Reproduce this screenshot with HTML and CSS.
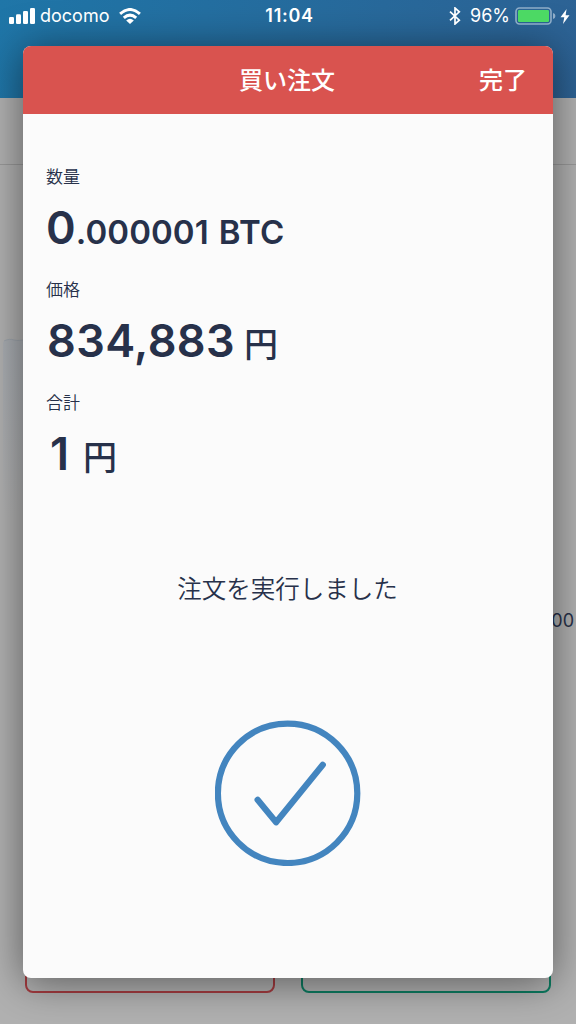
FILE: index.html
```html
<!DOCTYPE html>
<html lang="ja">
<head>
  <meta charset="UTF-8" />
  <title>買い注文</title>
  <meta name="viewport" content="width=device-width, initial-scale=1.0" />
  <link rel="stylesheet" href="styles.css">
</head>
<body>
  <div class="page">
    <div class="topbar"></div>
    <div class="tabs"></div>
    <div class="chart">
      <svg class="chart-line" width="24" height="180" viewBox="0 0 24 180">
        <defs>
          <linearGradient id="fade" x1="0" y1="0" x2="0" y2="1">
            <stop offset="0" stop-color="#a9adb2" />
            <stop offset="1" stop-color="#b1b1b1" />
          </linearGradient>
        </defs>
        <path class="area" d="M3 4 C7 1 11 1 14 2 C18 3 21 2 24 2 V180 H3 Z" />
        <path class="line" d="M4 3 C8 1 11 1 14 2 C18 3 21 2 24 2" />
      </svg>
      <div class="axis">00</div>
    </div>
    <div class="actions">
      <div class="btn sell"></div>
      <div class="btn buy"></div>
    </div>
  </div>

  <div class="modal">
    <div class="modal-header">
      <span></span>
      <h1>買い注文</h1>
      <a class="done">完了</a>
    </div>
    <div class="modal-body">
      <div class="field">
        <div class="label">数量</div>
        <div class="value amount"><b>0</b><span class="decimals">.000001</span><span class="unit">BTC</span></div>
      </div>
      <div class="field">
        <div class="label">価格</div>
        <div class="value price"><b>834,883</b><span class="yen">円</span></div>
      </div>
      <div class="field">
        <div class="label">合計</div>
        <div class="value total"><b>1</b><span class="yen">円</span></div>
      </div>
      <p class="message">注文を実行しました</p>
      <svg class="check" width="146" height="146" viewBox="0 0 146 146">
        <circle cx="72.6" cy="73.3" r="69.7" />
        <path d="M42.6 79.8 L61.1 102.3 L107.8 44.8" />
      </svg>
    </div>
  </div>

  <div class="statusbar">
    <div class="status-left">
      <svg width="26" height="16" viewBox="0 0 26 16">
        <rect x="0" y="9" width="5" height="7" rx="1.3" />
        <rect x="7" y="6.3" width="5" height="9.7" rx="1.3" />
        <rect x="14" y="3" width="5" height="13" rx="1.3" />
        <rect x="21" y="0" width="5" height="16" rx="1.3" />
      </svg>
      <span class="carrier">docomo</span>
      <svg width="22" height="16" viewBox="0 0 22 16">
        <path class="wave" d="M1.1 5.8 Q11 -2.8 20.9 5.8" />
        <path class="wave" d="M4.8 9.9 Q11 4.4 17.2 9.9" />
        <path d="M7.2 12.4 Q11 9 14.8 12.4 L11 16 Z" />
      </svg>
    </div>
    <div class="clock">11:04</div>
    <div class="status-right">
      <svg width="12" height="18" viewBox="0 0 12 18">
        <path class="bluetooth" d="M1 4.6 L10.3 13.2 L6 17 V1 L10.3 4.8 L1 13.4" />
      </svg>
      <span class="percent">96%</span>
      <svg width="41" height="18" viewBox="0 0 41 18">
        <rect class="battery" x="1" y="1" width="35" height="16" rx="3.5" />
        <rect class="charge" x="3" y="3" width="31" height="12" rx="1.2" />
        <path class="cap" d="M38 6 Q40.4 6.7 40.4 9 Q40.4 11.3 38 12 Z" />
      </svg>
      <svg width="10" height="15" viewBox="0 0 10 15">
        <path d="M6.6 0 L0.5 8.2 H4.3 L3 15 L9.5 6.3 H5.6 Z" />
      </svg>
    </div>
  </div>
</body>
</html>
```
FILE: styles.css
```css
:root {
  --red: #d9534f;
  --navy: #27314a;
  --blue: #4385bf;
  --paper: #fbfbfb;
}

* {
  box-sizing: border-box;
}

body {
  margin: 0;
  position: relative;
  width: 576px;
  height: 1024px;
  overflow: hidden;
  font-family: Inter, "Noto Sans CJK JP", sans-serif;
  color: var(--navy);
}

/* dimmed page behind the dialog */
.page {
  display: flex;
  flex-direction: column;
  height: 100%;
  background: #b1b1b1;
}

.topbar {
  height: 98px;
  background: linear-gradient(100deg, #1f76a8, #2d6294);
}

.tabs {
  height: 67px;
  border-bottom: 1px solid #999;
}

.chart {
  flex: 1;
  display: flex;
  flex-direction: column;
  justify-content: space-between;
  padding-top: 173px;
  padding-bottom: 302px;
}

.chart-line .area {
  fill: url(#fade);
}

.chart-line .line {
  fill: none;
  stroke: #9da4ac;
  stroke-width: 1;
}

.axis {
  align-self: flex-end;
  padding-right: 2px;
  font-size: 18px;
  line-height: 20px;
}

.actions {
  display: flex;
  justify-content: space-between;
  padding: 0 25px 31px;
}

.btn {
  width: 250px;
  height: 60px;
  border: 2px solid;
  border-radius: 8px;
}

.sell {
  border-color: #a53c40;
}

.buy {
  border-color: #0c7c61;
}

/* dialog */
.modal {
  position: absolute;
  top: 46px;
  left: 23px;
  width: 530px;
  height: 932px;
  display: flex;
  flex-direction: column;
  background: var(--paper);
  border-radius: 8px;
  box-shadow: 0 4px 42px rgba(0, 0, 0, 0.5);
  overflow: hidden;
}

.modal-header {
  display: grid;
  grid-template-columns: 1fr auto 1fr;
  align-items: center;
  height: 68px;
  padding: 2px 26px 0 24px;
  background: var(--red);
  color: #fff;
}

.modal-header h1,
.done {
  margin: 0;
  font-size: 24px;
  font-weight: 500;
  line-height: 36px;
}

.done {
  text-align: right;
}

.modal-body {
  display: flex;
  flex-direction: column;
  padding: 50px 24px 0 23px;
}

.field {
  height: 113px;
}

.label {
  height: 26px;
  font-size: 17px;
  font-weight: 350;
  line-height: 26px;
}

.value {
  display: flex;
  align-items: baseline;
  height: 66px;
  font-size: 33px;
  font-weight: 600;
  line-height: 76px;
}

.value b {
  font-size: 45px;
  font-weight: 600;
}

.decimals {
  letter-spacing: 0.1px;
}

.unit {
  margin-left: 10px;
  letter-spacing: 0.3px;
}

.price b {
  padding-left: 1px;
  letter-spacing: 0.4px;
}

.total b {
  padding: 0 5px 0 4px;
}

.yen {
  margin-left: 9px;
  font-size: 34px;
  font-weight: 500;
}

.message {
  margin: 68px 0 0;
  font-size: 24.5px;
  font-weight: 350;
  line-height: 36px;
  text-align: center;
}

.check {
  align-self: center;
  margin-top: 113px;
  fill: none;
  stroke: var(--blue);
  stroke-width: 6.2;
  stroke-linecap: round;
  stroke-linejoin: round;
}

/* phone status bar */
.statusbar {
  position: absolute;
  top: 0;
  left: 0;
  display: grid;
  grid-template-columns: 1fr auto 1fr;
  align-items: center;
  width: 100%;
  height: 32px;
  padding: 0 6px 0 9px;
  color: #fff;
  font-size: 18px;
  line-height: 22px;
}

.statusbar svg {
  fill: #fff;
}

.status-left,
.status-right {
  display: flex;
  align-items: center;
}

.status-right {
  justify-content: flex-end;
}

.carrier {
  margin: 0 10px 0 5px;
}

.clock {
  font-weight: 600;
  letter-spacing: 0.7px;
}

.percent {
  margin: 0 5px 0 9px;
}

.status-right svg:last-child {
  margin-left: 4px;
}

.statusbar .wave {
  fill: none;
  stroke: #fff;
  stroke-width: 3;
}

.statusbar .bluetooth {
  fill: none;
  stroke: #fff;
  stroke-width: 1.7;
}

.statusbar .battery {
  fill: none;
  stroke: #8fadc8;
  stroke-width: 1.6;
}

.statusbar .charge {
  fill: #4cd964;
}

.statusbar .cap {
  fill: #8fadc8;
}
```
